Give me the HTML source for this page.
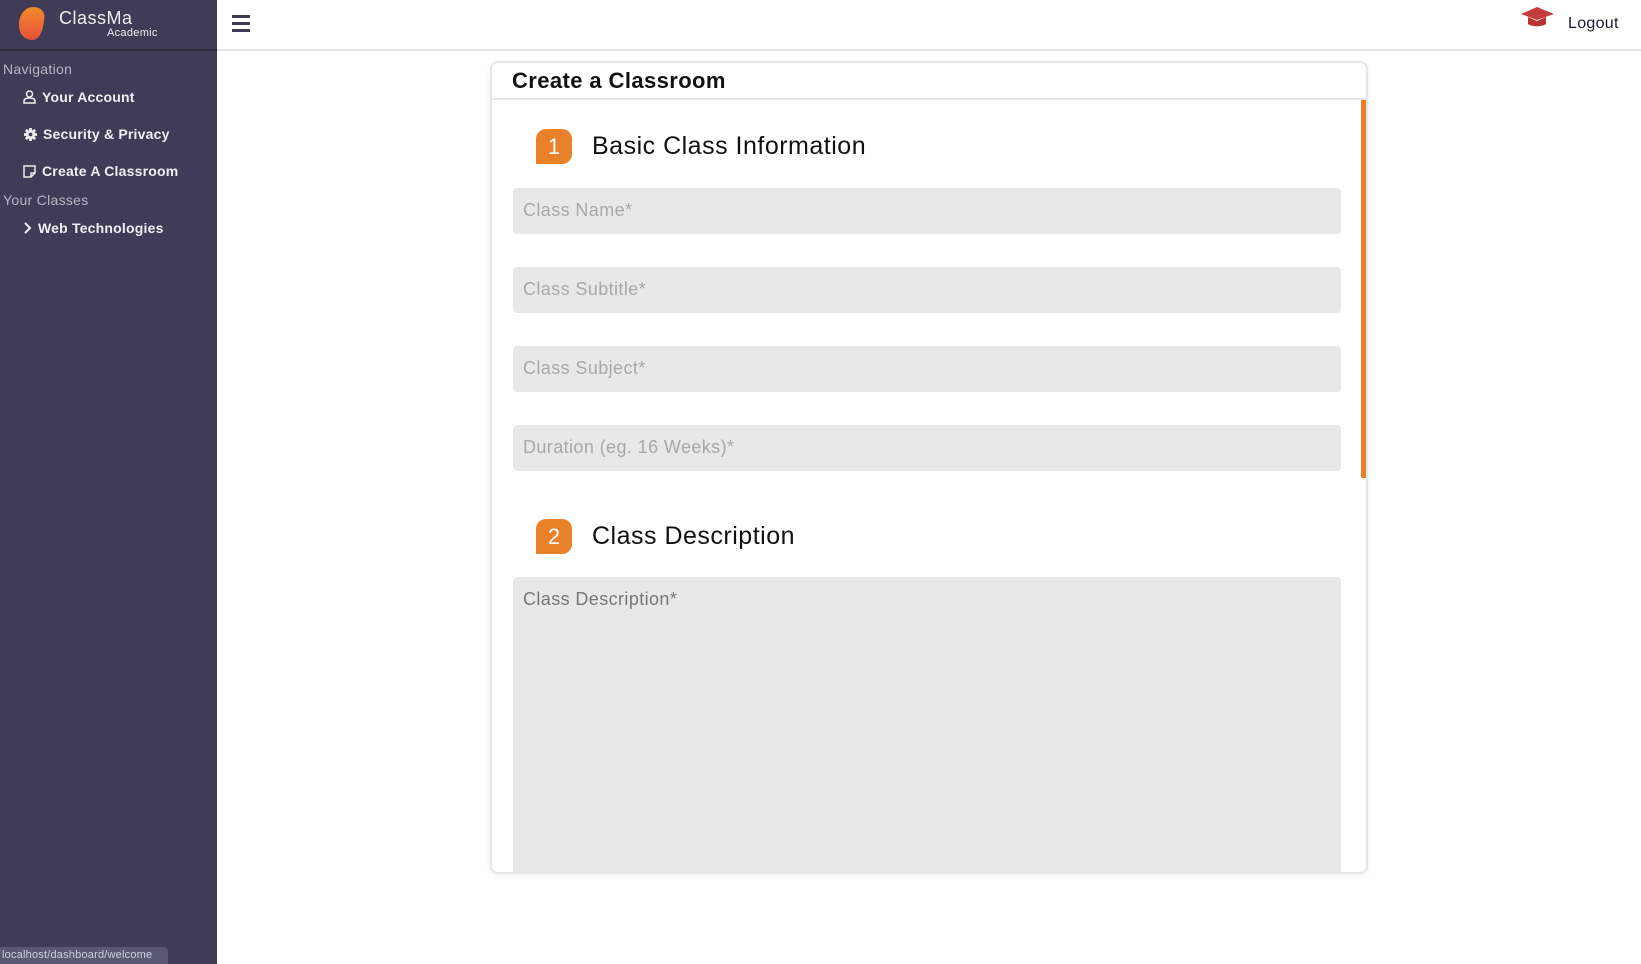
<!DOCTYPE html>
<html><head><meta charset="utf-8"><style>
*{box-sizing:border-box;margin:0;padding:0}
body{width:1641px;height:964px;overflow:hidden;background:#fff;font-family:"Liberation Sans",sans-serif;position:relative}
.side{position:absolute;left:0;top:0;width:217px;height:964px;background:#403b56}
.sidehead{position:absolute;left:0;top:0;width:217px;height:51px;border-bottom:2px solid #2c2a3c}
.brand{position:absolute;left:59px;top:8px;color:#eee;font-size:18px;letter-spacing:.5px}
.acad{position:absolute;left:107px;top:27px;color:#eee;font-size:11px;letter-spacing:.3px}
.lbl{position:absolute;left:3px;color:#b8b6c6;font-size:14px;letter-spacing:.3px}
.item{position:absolute;color:#f0eff5;font-size:14px;font-weight:bold;display:flex;align-items:center;gap:6px;letter-spacing:.2px}
.top{position:absolute;left:217px;top:0;right:0;height:51px;border-bottom:2px solid #e4e4e4}
.ham{position:absolute;left:232px;top:15px;width:18px}
.ham div{height:3px;background:#3d3a52;margin-bottom:4px}
.logout{position:absolute;left:1568px;top:15px;font-size:16px;color:#1a1a2e;letter-spacing:.3px}
.card{position:absolute;left:490px;top:61px;width:878px;height:813px;border:2px solid #e6e6e6;border-radius:8px;box-shadow:0 2px 6px rgba(0,0,0,.06);overflow:hidden}
.ctitle{position:absolute;left:20px;top:5px;font-size:22px;font-weight:bold;color:#111;letter-spacing:.4px}
.cline{position:absolute;left:0;right:0;top:35px;height:2px;background:#e6e6e6}
.scroll{position:absolute;left:869px;top:37px;width:5px;height:378px;background:#e87f25}
.badge{position:absolute;width:36px;height:35px;background:#e8812a;border-radius:10px 10px 10px 0;color:#fff;font-size:22px;text-align:center;line-height:35px}
.h{position:absolute;font-size:25px;color:#111;letter-spacing:.5px}
.inp{position:absolute;left:21px;width:828px;height:46px;background:#e8e8e8;border-radius:4px;color:#a8a8a8;font-size:18px;padding:12px 10px;letter-spacing:.4px}
.status{position:absolute;left:0;top:947px;width:168px;height:17px;background:#5b5873;border-radius:0 4px 0 0;color:#cfcde0;font-size:11px;padding:2px 2px;letter-spacing:.2px}
</style></head><body>
<div class="side">
 <div class="sidehead">
  <svg style="position:absolute;left:18px;top:6px" width="28" height="35" viewBox="0 0 28 35"><defs><linearGradient id="g" x1="0" y1="0" x2="0" y2="1"><stop offset="0" stop-color="#f08a2a"/><stop offset="1" stop-color="#e8523a"/></linearGradient></defs><path d="M15 1C24 1 28 7 26 15C25 22 23 33 15 34C6 34 1 28 1 19C1 9 7 1 15 1Z" fill="url(#g)"/></svg>
  <div class="brand">ClassMa</div><div class="acad">Academic</div>
 </div>
 <div class="lbl" style="top:61px">Navigation</div>
 <div class="item" style="left:23px;top:89px"><svg width="13" height="14" viewBox="0 0 13 14" fill="none" stroke="#eee" stroke-width="1.5"><circle cx="6.5" cy="4" r="3"/><path d="M1 13V11C1 9 3 8 6.5 8S12 9 12 11V13Z"/></svg>Your Account</div>
 <div class="item" style="left:24px;top:126px"><svg width="13" height="13" viewBox="0 0 14 14"><circle cx="7" cy="7" r="5" fill="#eee"/><g stroke="#eee" stroke-width="3"><path d="M7 0V14M0 7H14M2 2L12 12M12 2L2 12"/></g><circle cx="7" cy="7" r="2" fill="#403b56"/></svg>Security &amp; Privacy</div>
 <div class="item" style="left:23px;top:163px"><svg width="13" height="13" viewBox="0 0 13 13" fill="none" stroke="#eee" stroke-width="1.5"><path d="M1 1H12V8L8 12H1Z M8 12V8H12"/></svg>Create A Classroom</div>
 <div class="lbl" style="top:192px">Your Classes</div>
 <div class="item" style="left:23px;top:220px"><svg width="9" height="12" viewBox="0 0 9 12" fill="none" stroke="#eee" stroke-width="2"><path d="M2 1L7 6L2 11"/></svg>Web Technologies</div>
</div>
<div class="top"></div>
<div class="ham"><div></div><div></div><div></div></div>
<svg style="position:absolute;left:1520px;top:6px" width="35" height="24" viewBox="0 0 35 24"><path d="M1 8L17 1L34 8L17 14Z" fill="#c43c3c"/><path d="M8 11V18C12 21 22 21 26 18V11L17 15Z" fill="#b83232"/></svg>
<div class="logout">Logout</div>
<div class="card">
 <div class="ctitle">Create a Classroom</div>
 <div class="cline"></div>
 <div class="scroll"></div>
 <div class="badge" style="left:44px;top:66px">1</div>
 <div class="h" style="left:100px;top:69px">Basic Class Information</div>
 <div class="inp" style="top:125px">Class Name*</div>
 <div class="inp" style="top:204px">Class Subtitle*</div>
 <div class="inp" style="top:283px">Class Subject*</div>
 <div class="inp" style="top:362px">Duration (eg. 16 Weeks)*</div>
 <div class="badge" style="left:44px;top:456px">2</div>
 <div class="h" style="left:100px;top:459px">Class Description</div>
 <div class="inp" style="top:514px;height:300px;color:#777">Class Description*</div>
</div>
<div class="status">localhost/dashboard/welcome</div>
</body></html>
